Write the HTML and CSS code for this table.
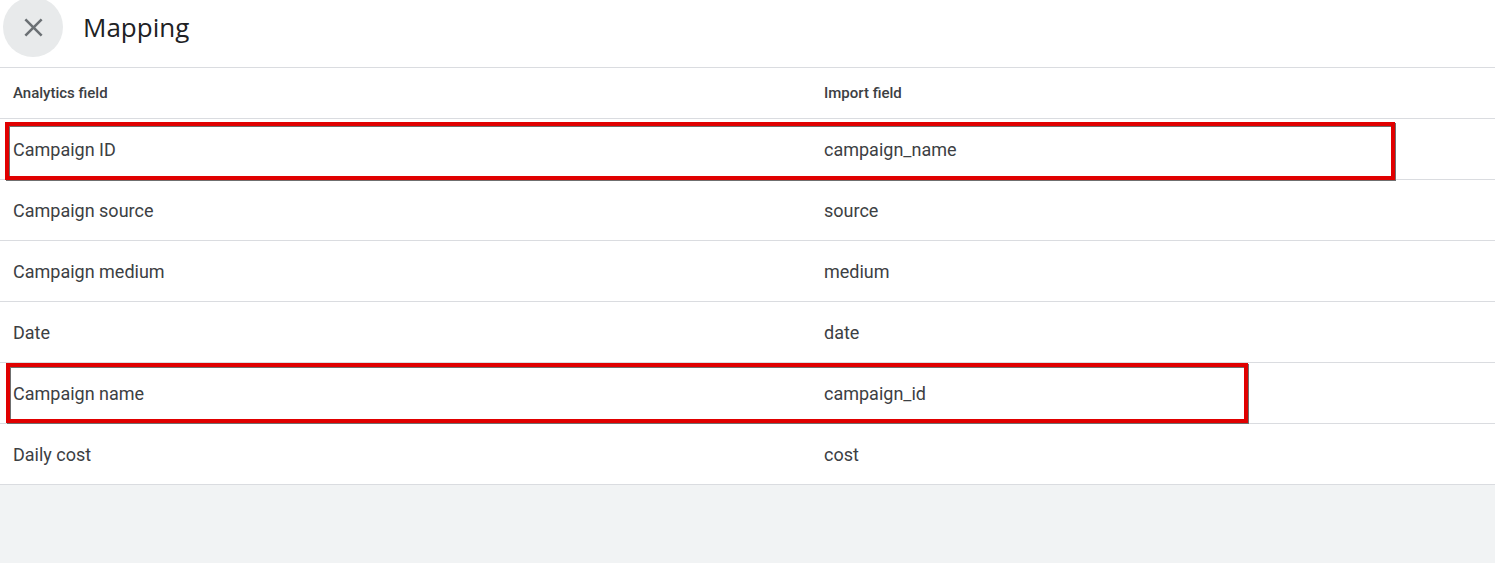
FILE: index.html
```html
<!DOCTYPE html>
<html>
<head>
<meta charset="utf-8">
<link rel="stylesheet" href="styles.css">
</head>
<body>
<div class="page">
  <header class="top">
    <button class="close" aria-label="Close">
      <svg width="31" height="31" viewBox="0 0 24 24"><path d="M19 6.41 17.59 5 12 10.59 6.41 5 5 6.41 10.59 12 5 17.59 6.41 19 12 13.41 17.59 19 19 17.59 13.41 12z" fill="#6b7074"/></svg>
    </button>
    <h1 class="title">Mapping</h1>
  </header>
  <div class="table">
    <div class="row head"><div class="cell">Analytics field</div><div class="cell">Import field</div></div>
    <div class="row"><div class="cell">Campaign ID</div><div class="cell">campaign_name</div><span class="mark mark-1"></span></div>
    <div class="row"><div class="cell">Campaign source</div><div class="cell">source</div></div>
    <div class="row"><div class="cell">Campaign medium</div><div class="cell">medium</div></div>
    <div class="row"><div class="cell">Date</div><div class="cell">date</div></div>
    <div class="row"><div class="cell">Campaign name</div><div class="cell">campaign_id</div><span class="mark mark-2"></span></div>
    <div class="row"><div class="cell">Daily cost</div><div class="cell">cost</div></div>
  </div>
  <div class="footer"></div>
</div>
</body>
</html>
```
FILE: styles.css
```css
html, body { margin: 0; padding: 0; }
body {
  font-family: Roboto, "Noto Sans", Arial, sans-serif;
  color: #3c4043;
  background: #ffffff;
  width: 1495px;
  height: 563px;
  overflow: hidden;
}
.page { display: flex; flex-direction: column; height: 563px; }
.top {
  height: 67px;
  display: flex;
  align-items: flex-start;
  border-bottom: 1px solid #dadce0;
  box-sizing: content-box;
}
.close {
  width: 60px;
  height: 60px;
  margin: -3px 0 0 3px;
  border: none;
  border-radius: 50%;
  background: #e8eaeb;
  display: flex;
  align-items: center;
  justify-content: center;
  padding: 0;
}
.title {
  margin: 9px 0 0 20px;
  font-family: "Open Sans", Roboto, sans-serif;
  font-weight: 400;
  font-size: 26px;
  line-height: 36px;
  color: #202124;
  letter-spacing: 0;
}
.table { display: flex; flex-direction: column; }
.row {
  position: relative;
  display: grid;
  grid-template-columns: 811px 1fr;
  height: 60px;
  align-items: center;
  padding-left: 13px;
  border-bottom: 1px solid #dadce0;
  font-size: 18px;
  color: #3c4043;
}
.row.head {
  height: 50px;
  font-size: 15px;
  font-weight: 500;
  color: #3c4043;
}
.mark {
  position: absolute;
  border: 4px solid #e00000;
  box-shadow: 1px 1px 0 #6f6f6f, inset 1px 1px 0 #6f6f6f;
  pointer-events: none;
}
.mark-1 { left: 5px; top: 3px; width: 1382px; height: 50px; }
.mark-2 { left: 6px; top: 0px; width: 1234px; height: 52px; }
.footer { flex: 1; background: #f1f3f4; }
```
